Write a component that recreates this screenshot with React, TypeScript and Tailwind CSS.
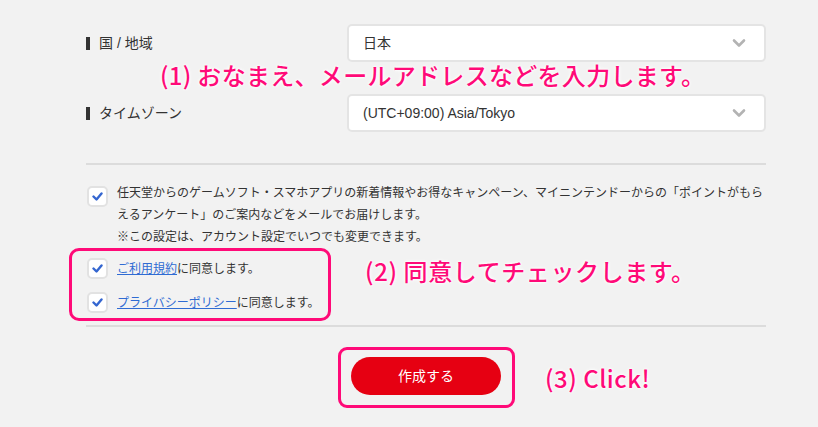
import React from 'react';

const jp = "font-['Liberation_Sans','Noto_Sans_CJK_JP',sans-serif]";
const note = "font-['Noto_Sans_CJK_JP',sans-serif] font-medium text-[#ff0a78] [text-shadow:0_0_2px_#fff,0_0_3px_#fff,0_0_4px_#fff]";

function Chevron() {
    return (
        <svg width="14" height="9" viewBox="0 0 14 9" className="absolute right-[18px] top-1/2 -translate-y-1/2">
            <path d="M2 2l5 5 5-5" fill="none" stroke="#b3b3b3" strokeWidth="2.6" strokeLinecap="round" strokeLinejoin="round" />
        </svg>
    );
}

function Select({ value }: { value: string }) {
    return (
        <div className="relative flex h-[38px] w-[419px] items-center rounded-[5px] border-2 border-[#e4e4e4] bg-white pl-[14px] text-[14px] text-[#333]">
            {value}
            <Chevron />
        </div>
    );
}

function Check() {
    return (
        <div className="flex h-[21px] w-[21px] shrink-0 items-center justify-center rounded-[5px] border-2 border-[#e2e2e2] bg-white">
            <svg width="11" height="9" viewBox="0 0 11 9">
                <path d="M1.5 4.5l3 3 5-6" fill="none" stroke="#3466d0" strokeWidth="2.4" strokeLinecap="round" strokeLinejoin="round" />
            </svg>
        </div>
    );
}

function Label({ text }: { text: string }) {
    return (
        <div className="flex w-[261px] items-center text-[14px] text-[#333]">
            <span className="mr-[9px] h-[13px] w-[4px] bg-[#333]" />
            {text}
        </div>
    );
}

export default function App() {
    return (
        <div className={`relative h-[427px] w-[818px] overflow-hidden bg-[#f2f2f2] ${jp}`}>
            <div className="ml-[86px] w-[680px]">
                <div className="mt-[24px] flex items-center">
                    <Label text="国 / 地域" />
                    <Select value="日本" />
                </div>
                <div className="mt-[32px] flex items-center">
                    <Label text="タイムゾーン" />
                    <Select value="(UTC+09:00) Asia/Tokyo" />
                </div>

                <div className="mt-[31px] h-[2px] bg-[#dcdcdc]" />

                <div className="mt-[17px] flex items-start gap-[9px] pl-[1px]">
                    <div className="mt-[4px]"><Check /></div>
                    <p className="text-[12px] leading-[22px] text-[#333]">
                        任天堂からのゲームソフト・スマホアプリの新着情報やお得なキャンペーン、マイニンテンドーからの「ポイントがもらえるアンケート」のご案内などをメールでお届けします。
                        <br />
                        ※この設定は、アカウント設定でいつでも変更できます。
                    </p>
                </div>
                <div className="mt-[10px] flex items-center gap-[9px] pl-[1px] text-[12px] text-[#333]">
                    <Check />
                    <span><a className="text-[#2f6bd3] underline">ご利用規約</a>に同意します。</span>
                </div>
                <div className="mt-[13px] flex items-center gap-[9px] pl-[1px] text-[12px] text-[#333]">
                    <Check />
                    <span><a className="text-[#2f6bd3] underline">プライバシーポリシー</a>に同意します。</span>
                </div>

                <div className="mt-[12px] h-[2px] bg-[#dcdcdc]" />

                <div className="mt-[30px] flex justify-center">
                    <button className="h-[38px] w-[150px] rounded-full bg-[#e60012] text-[14px] text-white">作成する</button>
                </div>
            </div>

            <div className="absolute left-[69px] top-[248px] h-[73px] w-[262px] rounded-[10px] border-[3px] border-[#ff0a78]" />
            <div className="absolute left-[338px] top-[347px] h-[61px] w-[177px] rounded-[9px] border-[3px] border-[#ff0a78]" />

            <div className={`absolute left-[160px] top-[60px] text-[24px] leading-[30px] tracking-[0.3px] ${note}`}>(1) おなまえ、メールアドレスなどを入力します。</div>
            <div className={`absolute left-[365px] top-[256px] text-[24px] leading-[30px] tracking-[0.6px] ${note}`}>(2) 同意してチェックします。</div>
            <div className={`absolute left-[545px] top-[363px] text-[24px] leading-[30px] tracking-[0.5px] ${note}`}>(3) Click!</div>
        </div>
    );
}
